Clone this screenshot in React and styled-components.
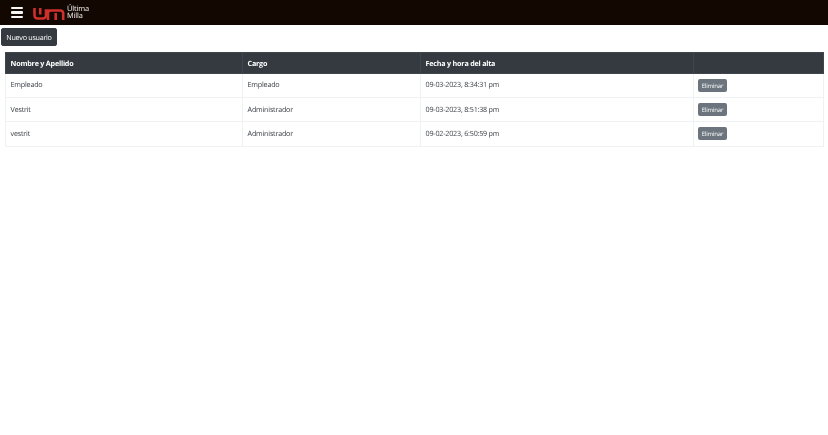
import React from "react";
import styled, { createGlobalStyle } from "styled-components";

const Global = createGlobalStyle`
  html, body { margin: 0; padding: 0; background: #fff; }
  body { font-family: "Open Sans", "Noto Sans", "Liberation Sans", sans-serif; font-size: 7.2px; letter-spacing: -0.22px; color: #495057; text-rendering: geometricPrecision; }
  button { text-rendering: geometricPrecision; }
`;
const Page = styled.div`will-change: transform;`;
const Navbar = styled.header`
  height: 25px; background: #130701; display: flex; align-items: center; padding-left: 11px; gap: 10px;
`;
const Burger = styled.div`
  width: 12px; height: 11.5px; display: flex; flex-direction: column; justify-content: space-between;
  span { display: block; height: 2.3px; background: #f6f6f6; border-radius: 1px; }
`;
const Brand = styled.div`display: flex; align-items: center; gap: 2px; margin-top: 1px;`;
const BrandText = styled.div`
  color: #f6f6f6; font-size: 7.4px; line-height: 7px; width: 26px; letter-spacing: -0.1px;
`;
const Toolbar = styled.div`padding: 3px 1px 0; height: 24px; box-sizing: content-box;`;
const NewButton = styled.button`
  display: block; height: 18px; width: 56px; padding: 1px 0 0; background: #343a40; color: #fff; border: 1px solid #343a40;
  border-radius: 2px; font: 7.2px "Open Sans", sans-serif; letter-spacing: -0.28px;
`;
const TableWrap = styled.div`padding: 0 5px;`;
const Table = styled.table`
  width: 818px; border-collapse: collapse; table-layout: fixed;
`;
const Th = styled.th`
  height: 21px; padding: 1px 5px 0 4.6px; background: #343a40; color: #fff; font-weight: 700; text-align: left;
  font-size: 7.2px; border: 1px solid #3f464d; box-sizing: border-box; width: ${p => p.$w}px;
`;
const Td = styled.td`
  height: 24.2px; padding: 0 5px 0.5px 4.6px; vertical-align: middle; border: 1px solid #eff1f3; box-sizing: border-box;
  color: #3d4248;
`;
const ActionTd = styled(Td)`padding: 0 0 0 4px;`;
const DeleteButton = styled.button`
  display: block; width: 29px; height: 13px; padding: 0; background: #6c757d; color: #fff; border: 0;
  border-radius: 2px; font: 6px "Open Sans", sans-serif; letter-spacing: -0.15px;
`;
const rows = [
  ["Empleado", "Empleado", "09-03-2023, 8:34:31 pm"],
  ["Vestrit", "Administrador", "09-03-2023, 8:51:38 pm"],
  ["vestrit", "Administrador", "09-02-2023, 6:50:59 pm"],
];
const Logo = () => (
  <svg width="32" height="13" viewBox="0 0 32 13" fill="none">
    <path d="M1.5 1V8.5A3 3 0 0 0 4.5 11.5H10A3 3 0 0 0 13 8.5V3.5H16" stroke="#d0302c" strokeWidth="2.6" />
    <path d="M7.2 1v6.5" stroke="#d0302c" strokeWidth="2.6" />
    <path d="M15 13V6A2.6 2.6 0 0 1 17.6 3.5H27.5A2.6 2.6 0 0 1 30.2 6V13M22.7 13V6" stroke="#d0302c" strokeWidth="2.6" />
  </svg>
);
export default function App() {
  return (
    <Page>
      <Global />
      <Navbar>
        <Burger><span /><span /><span /></Burger>
        <Brand>
          <Logo />
          <BrandText>Última Milla</BrandText>
        </Brand>
      </Navbar>
      <Toolbar><NewButton>Nuevo usuario</NewButton></Toolbar>
      <TableWrap>
        <Table>
          <thead>
            <tr>
              <Th $w={237}>Nombre y Apellido</Th>
              <Th $w={178}>Cargo</Th>
              <Th $w={273}>Fecha y hora del alta</Th>
              <Th $w={130} />
            </tr>
          </thead>
          <tbody>
            {rows.map((r, i) => (
              <tr key={i}>
                {r.map((c, j) => <Td key={j}>{c}</Td>)}
                <ActionTd><DeleteButton>Eliminar</DeleteButton></ActionTd>
              </tr>
            ))}
          </tbody>
        </Table>
      </TableWrap>
    </Page>
  );
}
